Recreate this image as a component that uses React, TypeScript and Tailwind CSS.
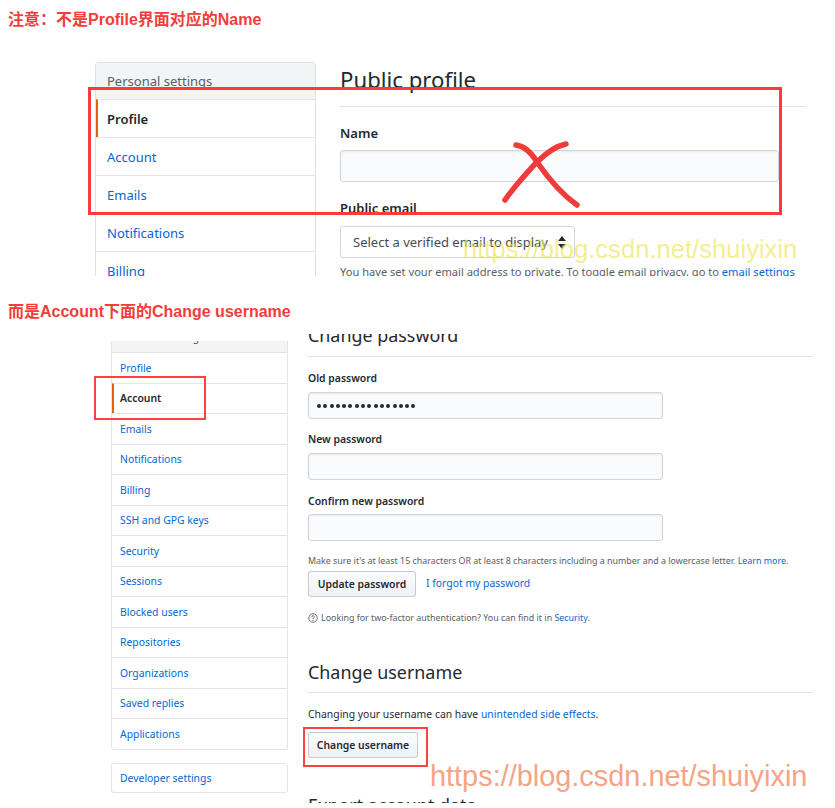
export default function App() {
  const topMenu = ["Account", "Emails", "Notifications", "Billing", "SSH and GPG keys"];
  const bottomMenu = [
    "Emails",
    "Notifications",
    "Billing",
    "SSH and GPG keys",
    "Security",
    "Sessions",
    "Blocked users",
    "Repositories",
    "Organizations",
    "Saved replies",
    "Applications",
  ];
  const dots = Array.from({ length: 16 });
  return (
    <div className="relative w-[835px] h-[808px] overflow-hidden bg-white font-['Noto_Sans',sans-serif] text-[#24292e]">
      {/* label 1 */}
      <div className="h-[62px] pl-[8px] pt-[8px]">
        <div className="h-[24px] leading-[24px] text-[16px] font-bold text-[#f63b3b] font-['Liberation_Sans','Noto_Sans_CJK_SC',sans-serif]">
          注意：不是Profile界面对应的Name
        </div>
      </div>

      {/* top screenshot */}
      <div className="h-[214px] overflow-hidden flex pl-[95px]">
        <div className="w-[221px] shrink-0">
          <div className="border border-[#dfe2e5] rounded-t-[3px]">
            <div className="h-[36px] bg-[#f3f4f6] pl-[11px] flex items-center text-[13px] leading-[20px] text-[#586069]">
              Personal settings
            </div>
            <div className="h-[38px] border-t border-t-[#e1e4e8] border-l-2 border-l-[#e36209] pl-[9px] flex items-center text-[13px] leading-[20px] font-semibold text-[#24292e]">
              Profile
            </div>
            {topMenu.map((m) => (
              <div
                key={m}
                className="h-[38px] border-t border-[#e1e4e8] pl-[11px] flex items-center text-[13px] leading-[20px] text-[#0366d6]"
              >
                {m}
              </div>
            ))}
          </div>
        </div>
        <div className="ml-[24px] w-[466px] shrink-0">
          <div className="mt-[3px] pb-[11px] border-b border-[#e1e4e8]">
            <div className="h-[30px] leading-[30px] text-[22.2px]">Public profile</div>
          </div>
          <div className="mt-[16px] h-[20px] leading-[20px] text-[13px] font-semibold">Name</div>
          <div className="mt-[7px] w-[439px] h-[32px] bg-[#fafbfc] border border-[#d1d5da] rounded-[3px] shadow-[inset_0_1px_2px_rgba(27,31,35,0.075)]" />
          <div className="mt-[16px] h-[20px] leading-[20px] text-[13px] font-semibold">Public email</div>
          <div className="mt-[8px] w-[235px] h-[32px] bg-white border border-[#d1d5da] rounded-[3px] flex items-center pl-[12px] pr-[8px] justify-between">
            <span className="text-[13px] leading-[20px] text-[#444d56]">Select a verified email to display</span>
            <svg width="8" height="13" viewBox="0 0 8 13">
              <path d="M4 0 L8 5 L0 5 Z" fill="#24292e" />
              <path d="M0 8 L8 8 L4 13 Z" fill="#24292e" />
            </svg>
          </div>
          <div className="mt-[5px] h-[18px] leading-[18px] text-[11.1px] text-[#586069] whitespace-nowrap">
            You have set your email address to private. To toggle email privacy, go to{" "}
            <span className="text-[#0366d6]">email settings</span>
          </div>
        </div>
      </div>

      {/* label 2 */}
      <div className="h-[58px] pl-[8px] pt-[24px]">
        <div className="h-[24px] leading-[24px] text-[16px] font-bold text-[#f63b3b] font-['Liberation_Sans','Noto_Sans_CJK_SC',sans-serif]">
          而是Account下面的Change username
        </div>
      </div>

      {/* bottom screenshot */}
      <div className="h-[469px] overflow-hidden flex pl-[111px]">
        <div className="w-[177px] shrink-0 pt-[7px]">
          <div className="border border-t-0 border-[#e1e4e8] rounded-b-[3px]">
            <div className="h-[11px] overflow-hidden bg-[#f3f4f6] pl-[8px]">
              <div className="mt-[-12px] h-[16px] leading-[16px] text-[10.4px] text-[#586069]">Personal settings</div>
            </div>
            <div className="h-[30.5px] border-t border-[#e1e4e8] pl-[8px] flex items-center text-[10.4px] leading-[16px] text-[#0366d6]">
              Profile
            </div>
            <div className="h-[30.5px] border-t border-t-[#e1e4e8] border-l-2 border-l-[#e36209] pl-[6px] flex items-center text-[10.4px] leading-[16px] font-semibold text-[#24292e]">
              Account
            </div>
            {bottomMenu.map((m) => (
              <div
                key={m}
                className="h-[30.5px] border-t border-[#e1e4e8] pl-[8px] flex items-center text-[10.4px] leading-[16px] text-[#0366d6]"
              >
                {m}
              </div>
            ))}
          </div>
          <div className="mt-[13px] h-[30px] border border-[#e1e4e8] rounded-[3px] pl-[8px] flex items-center text-[10.4px] leading-[16px] text-[#0366d6]">
            Developer settings
          </div>
        </div>

        <div className="ml-[20px] w-[505px] shrink-0">
          <div className="h-[23px] border-b border-[#e1e4e8] overflow-hidden">
            <div className="mt-[-11px] h-[24px] leading-[24px] text-[17.9px]">Change password</div>
          </div>
          <div className="mt-[13px] h-[16px] leading-[16px] text-[10.4px] font-semibold">Old password</div>
          <div className="mt-[6px] w-[355px] h-[27px] bg-[#fafbfc] border border-[#d1d5da] rounded-[3px] shadow-[inset_0_1px_2px_rgba(27,31,35,0.075)] flex items-center pl-[8px] gap-[2.3px]">
            {dots.map((_, i) => (
              <span key={i} className="w-[4px] h-[4px] rounded-full bg-[#24292e]" />
            ))}
          </div>
          <div className="mt-[12px] h-[16px] leading-[16px] text-[10.4px] font-semibold">New password</div>
          <div className="mt-[6px] w-[355px] h-[27px] bg-[#fafbfc] border border-[#d1d5da] rounded-[3px] shadow-[inset_0_1px_2px_rgba(27,31,35,0.075)]" />
          <div className="mt-[13px] h-[16px] leading-[16px] text-[10.4px] font-semibold">Confirm new password</div>
          <div className="mt-[5px] w-[355px] h-[27px] bg-[#fafbfc] border border-[#d1d5da] rounded-[3px] shadow-[inset_0_1px_2px_rgba(27,31,35,0.075)]" />
          <div className="mt-[13px] h-[14px] leading-[14px] text-[8.9px] text-[#586069] whitespace-nowrap">
            Make sure it's at least 15 characters OR at least 8 characters including a number and a lowercase letter.{" "}
            <span className="text-[#0366d6]">Learn more.</span>
          </div>
          <div className="mt-[3px] flex items-center">
            <div className="w-[108px] h-[26px] rounded-[3px] border border-[rgba(27,31,35,0.2)] bg-gradient-to-b from-[#fafbfc] to-[#eff3f6] flex items-center justify-center text-[10.4px] font-semibold leading-[16px]">
              Update password
            </div>
            <span className="ml-[10px] text-[10.4px] leading-[16px] text-[#0366d6] -mt-[2px]">I forgot my password</span>
          </div>
          <div className="mt-[14px] h-[14px] flex items-center gap-[3px] text-[8.9px] leading-[14px] text-[#586069] whitespace-nowrap">
            <svg width="10" height="10" viewBox="0 0 16 16" fill="none">
              <circle cx="8" cy="8" r="6.8" stroke="#586069" strokeWidth="1.4" />
              <path
                d="M6 6.2a2 2 0 1 1 2.7 1.9c-.5.2-.7.6-.7 1.2v.4"
                stroke="#586069"
                strokeWidth="1.4"
                strokeLinecap="round"
              />
              <circle cx="8" cy="11.6" r="0.9" fill="#586069" />
            </svg>
            <span>
              Looking for two-factor authentication? You can find it in <span className="text-[#0366d6]">Security</span>.
            </span>
          </div>
          <div className="mt-[35px] pb-[8px] border-b border-[#e1e4e8]">
            <div className="h-[24px] leading-[24px] text-[17.9px]">Change username</div>
          </div>
          <div className="mt-[13px] h-[16px] leading-[16px] text-[10.4px]">
            Changing your username can have <span className="text-[#0366d6]">unintended side effects</span>.
          </div>
          <div className="mt-[10px] w-[110px] h-[26px] rounded-[3px] border border-[rgba(27,31,35,0.2)] bg-gradient-to-b from-[#fafbfc] to-[#eff3f6] flex items-center justify-center text-[10.4px] font-semibold leading-[16px]">
            Change username
          </div>
          <div className="mt-[35px] h-[24px] leading-[24px] text-[17.9px]">Export account data</div>
        </div>
      </div>

      {/* annotations */}
      <div className="absolute left-[88px] top-[87px] w-[694px] h-[128px] border-[3px] border-[#ff3a3a]" />
      <svg className="absolute left-0 top-0" width="835" height="808" viewBox="0 0 835 808" fill="none">
        <path
          d="M516 145 C 524 146, 531 152, 537 162 C 548 178, 560 193, 577 205"
          stroke="#f03b3b"
          strokeWidth="5.5"
          strokeLinecap="round"
        />
        <path
          d="M566 144 C 556 146, 546 153, 536 163 C 525 175, 513 188, 505 200"
          stroke="#f03b3b"
          strokeWidth="5.5"
          strokeLinecap="round"
        />
      </svg>
      <div className="absolute left-[463px] top-[237px] text-[25.6px] leading-none whitespace-nowrap text-[rgba(240,228,80,0.65)] font-['Liberation_Sans',sans-serif]">
        https://blog.csdn.net/shuiyixin
      </div>
      <div className="absolute left-[94px] top-[376px] w-[112px] h-[44px] border-2 border-[#ff4040]" />
      <div className="absolute left-[303px] top-[727px] w-[125px] h-[40px] border-2 border-[#ff4040]" />
      <div className="absolute left-[430px] top-[762px] text-[28.9px] leading-none whitespace-nowrap text-[#f5a486] font-['Liberation_Sans',sans-serif]">
        https://blog.csdn.net/shuiyixin
      </div>
    </div>
  );
}
